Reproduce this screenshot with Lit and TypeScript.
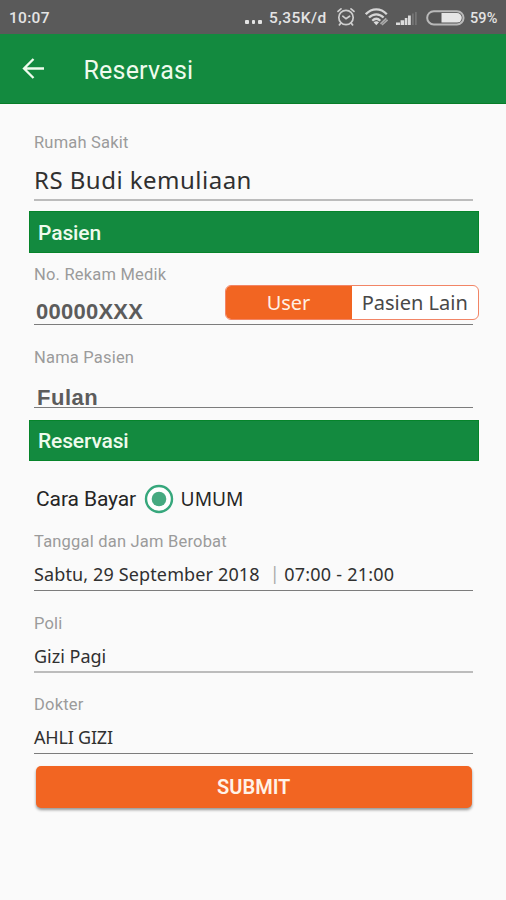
import { LitElement, html, css } from "lit";
import { customElement, property } from "lit/decorators.js";

@customElement("status-bar")
class StatusBar extends LitElement {
  static styles = css`
    :host {
      display: flex;
      align-items: center;
      height: 34px;
      flex: none;
      background: #5a5a5a;
      color: #e4e4e4;
      font: 500 15.5px/20px Roboto, sans-serif;
      padding: 2px 8px 0 9px;
      box-sizing: border-box;
      white-space: nowrap;
    }
    .time { letter-spacing: 0.3px; }
    .dots { margin-left: auto; display: flex; gap: 3px; margin-right: 7.5px; padding-top: 8px; }
    .dots i { width: 3.5px; height: 3.5px; background: #e4e4e4; border-radius: 1px; }
    .rate { letter-spacing: 0.45px; width: 59px; }
    svg { display: block; flex: none; }
    .alarm { margin-left: 8px; margin-top: -3px; }
    .wifi { margin-left: 9px; margin-top: -2px; }
    .signal { margin-left: 7px; }
    .battery { margin-left: 9px; margin-top: -1px; }
    .percent { font-size: 14.5px; width: 28px; margin: 1px 0 0 5px; letter-spacing: 0.1px; }
  `;
  render() {
    return html`
      <span class="time">10:07</span>
      <span class="dots"><i></i><i></i><i></i></span>
      <span class="rate">5,35K/d</span>
      <svg class="alarm" width="20" height="20" viewBox="0 0 20 20" fill="none" stroke="#cfcfcf" stroke-width="1.7" stroke-linecap="round">
        <circle cx="10" cy="10.5" r="7.2" />
        <path d="M2 4.400 5 1.900M18 4.400 15 1.900M6.800 9.2l3.200 2.600 3.600-2.600M4.800 16.200l-1.400 1.700M15.200 16.200l1.400 1.700" />
      </svg>
      <svg class="wifi" width="24" height="18" viewBox="0 0 24 18" fill="none" stroke="#d6d6d6" stroke-width="2.3">
        <path d="M.8 6.2C7-.2 15.6-.2 21.8 6.200M4 9.500c4.300-4.300 10.300-4.300 14.600 0M7.300 12.700c2.500-2.500 5.500-2.500 8 0" />
        <path d="M11.300 17.200 8.600 14.200c1.500-1.300 3.900-1.300 5.400 0z" fill="#dcdcdc" stroke="none" />
        <path d="M15.500 15.800l5.800-5.500M17 17l5.600-5.200" stroke="#aaa" stroke-width="1.6" />
      </svg>
      <svg class="signal" width="21" height="13" viewBox="0 0 21 13">
        <path d="M0 10.500h4V13H0zM4.600 8.300h3.600V13H4.600zM8.800 6h2.600v7H8.800zM12 3.500h2.800V13H12z" fill="#dcdcdc" />
        <path d="M16 1.500h1.800V13H16zM19 0h1.800v13H19z" fill="#747474" />
      </svg>
      <svg class="battery" width="39" height="16" viewBox="0 0 39 16">
        <rect x="1.2" y="1.2" width="36.300" height="13.300" rx="6.600" fill="#555" stroke="#b9b9b9" stroke-width="2" />
        <path d="M15.500 3H31a4.800 4.800 0 0 1 0 9.600H15.500z" fill="#e6e6e6" />
      </svg>
      <span class="percent">59%</span>
    `;
  }
}

@customElement("form-field")
class FormField extends LitElement {
  @property() label = "";
  static styles = css`
    :host {
      display: flex;
      flex-direction: column;
      margin: 0 33px 0 34px;
      border-bottom: 1px solid #7c7c7c;
      box-sizing: border-box;
      flex: none;
    }
    .label {
      font: 400 16.5px/20px Roboto, sans-serif;
      color: #9b9b9b;
      letter-spacing: 0.2px;
      white-space: nowrap;
    }
    .row { flex: 1; display: flex; align-items: flex-end; }
  `;
  render() {
    return html`<span class="label">${this.label}</span>
      <div class="row"><slot></slot></div>`;
  }
}

@customElement("app-root")
class AppRoot extends LitElement {
  static styles = css`
    :host {
      display: flex;
      flex-direction: column;
      height: 900px;
      background: #fafafa;
      font-family: "Noto Sans", sans-serif;
      color: #303030;
      white-space: nowrap;
      overflow: hidden;
    }
    .appbar {
      height: 70px;
      box-sizing: border-box;
      background: #138a3f;
      border-bottom: 1px solid #087d28;
      display: flex;
      align-items: center;
      padding-left: 22px;
      gap: 38.5px;
      flex: none;
    }
    .title { font: 400 25px/30px Roboto, sans-serif; color: #effbed; padding-top: 4px; letter-spacing: 0.2px; }
    .section {
      margin: 0 27.5px 0 28.5px;
      height: 42px;
      flex: none;
      box-sizing: border-box;
      background: #138a3f;
      border: 1px solid #06842b;
      padding-left: 8.5px;
      font: 500 21px/42px Roboto, sans-serif;
      color: #effbed;
    }
    .patient { margin-top: 10px; letter-spacing: -0.1px; }
    .reservation { margin-top: 12px; height: 41px; line-height: 41px; letter-spacing: -0.15px; }
    .hospital { margin-top: 29px; height: 68px; border-bottom: 2px solid #bcbcbc; }
    .record { margin-top: 12px; height: 60px; }
    .name { margin-top: 23px; height: 60px; }
    .schedule { margin-top: 18px; height: 59px; }
    .clinic { margin-top: 23px; height: 59px; border-bottom: 2px solid #bcbcbc; }
    .doctor { margin-top: 22px; height: 59px; }
    .large { font-size: 24px; line-height: 30px; margin-bottom: 4px; letter-spacing: 0.48px; }
    .bold { font: 700 22px/24px "Liberation Sans", sans-serif; color: #5c5c5c; }
    .number { margin: 0 0 1px 2px; letter-spacing: 0.25px; }
    .person { margin: 0 0 -3px 3px; letter-spacing: 0.5px; }
    .value { font-size: 18px; line-height: 24px; margin-bottom: 4px; letter-spacing: 0.13px; }
    .hours { letter-spacing: 0.22px; }
    .poli { margin-bottom: 3px; letter-spacing: 0; }
    .expert { letter-spacing: -0.2px; }
    .bar { color: #aaa; margin: 0 4.5px 5px 10px; }
    .toggle {
      margin: 0 -5.5px 4.5px auto;
      display: grid;
      grid-template-columns: 126px 1fr;
      width: 253.5px;
      height: 35px;
      box-sizing: border-box;
      border: 1.5px solid #f28566;
      border-radius: 6px;
      overflow: hidden;
      background: #fff;
      font-size: 20px;
      line-height: 33px;
      text-align: center;
      color: #484848;
    }
    .active { background: #f26522; color: #fff0e4; margin: -1px 0 -1px -1px; line-height: 35px; }
    .payment {
      height: 30px;
      margin: 23px 0 0 36px;
      flex: none;
      display: flex;
      align-items: center;
      font: 400 21px/30px Roboto, sans-serif;
      color: #252525;
    }
    .method { letter-spacing: -0.1px; }
    .payment svg { margin: -1px 7px 0 7.5px; }
    .option { font: 400 19.2px/30px "Noto Sans", sans-serif; }
    .submit {
      margin: 12px 34px 0 35.5px;
      height: 42px;
      flex: none;
      border: 0;
      border-radius: 5px;
      background: #f26522;
      box-shadow: 0 2px 3px rgba(0, 0, 0, 0.4);
      color: #fff2e8;
      font: 600 20px/43px Roboto, sans-serif;
      padding: 0;
    }
  `;
  render() {
    return html`
      <status-bar></status-bar>
      <header class="appbar">
        <svg width="23" height="21" viewBox="0 0 23 21" fill="none" stroke="#effbed" stroke-width="2.3">
          <path d="M22 10.500H2M11.500 1 2 10.500l9.500 9.500" />
        </svg>
        <span class="title">Reservasi</span>
      </header>
      <form-field class="hospital" label="Rumah Sakit"><span class="large">RS Budi kemuliaan</span></form-field>
      <div class="section patient">Pasien</div>
      <form-field class="record" label="No. Rekam Medik">
        <span class="bold number">00000XXX</span>
        <div class="toggle"><span class="active">User</span><span>Pasien Lain</span></div>
      </form-field>
      <form-field class="name" label="Nama Pasien"><span class="bold person">Fulan</span></form-field>
      <div class="section reservation">Reservasi</div>
      <div class="payment">
        <span class="method">Cara Bayar</span>
        <svg width="30" height="30" viewBox="0 0 30 30">
          <circle cx="15" cy="15" r="13" fill="#fff" stroke="#36a77c" stroke-width="2.4" />
          <circle cx="15" cy="15" r="7.300" fill="#45a980" />
        </svg>
        <span class="option">UMUM</span>
      </div>
      <form-field class="schedule" label="Tanggal dan Jam Berobat">
        <span class="value date">Sabtu, 29 September 2018</span>
        <span class="value bar">|</span>
        <span class="value hours">07:00 - 21:00</span>
      </form-field>
      <form-field class="clinic" label="Poli"><span class="value poli">Gizi Pagi</span></form-field>
      <form-field class="doctor" label="Dokter"><span class="value expert">AHLI GIZI</span></form-field>
      <button class="submit">SUBMIT</button>
    `;
  }
}
